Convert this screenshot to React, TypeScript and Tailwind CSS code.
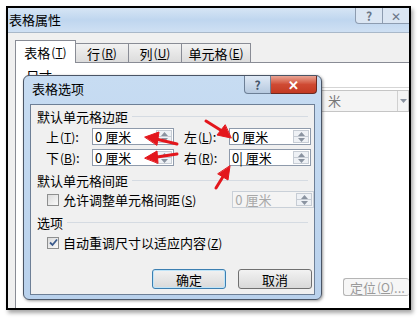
import React from "react";

const font = { fontFamily: '"Noto Sans CJK SC", "Noto Sans", sans-serif' };

function Key({ k }: { k: string }) {
  return (
    <span className="ml-[1px] text-[12px]">
      (<u>{k}</u>)
    </span>
  );
}

function Tri({ up }: { up?: boolean }) {
  return (
    <svg width="7" height="4" viewBox="0 0 7 4">
      <path d={up ? "M0 4 L3.5 0 L7 4 Z" : "M0 0 L3.5 4 L7 0 Z"} fill="#8a93a0" />
    </svg>
  );
}

function Spin({ value, disabled }: { value: string; disabled?: boolean }) {
  return (
    <div
      className={`flex h-[17px] w-[82px] items-stretch border ${
        disabled ? "border-[#c9d0d8] bg-[#f4f4f4] text-[#a8a8a8]" : "border-[#8e9aab] bg-white text-black"
      }`}
    >
      <div className="flex-1 pl-[2px] text-[13px] leading-[15px]">{value}</div>
      <div className="my-[1px] mr-[1px] flex w-[16px] flex-col border border-[#c6ccd4] bg-[#eef1f5]">
        <div className="flex flex-1 items-center justify-center border-b border-[#c6ccd4]">
          <Tri up />
        </div>
        <div className="flex flex-1 items-center justify-center">
          <Tri />
        </div>
      </div>
    </div>
  );
}

function GroupLabel({ text }: { text: string }) {
  return (
    <div className="flex h-[14px] items-center gap-[4px] pl-[6px] pr-[6px]">
      <span className="text-[13px] leading-none">{text}</span>
      <div className="h-px flex-1 bg-[#d5dbe2]" />
    </div>
  );
}

function Arrows() {
  return (
    <svg className="pointer-events-none absolute left-0 top-0" width="418" height="318">
      <g fill="#e3161c" stroke="#e3161c" strokeLinecap="round">
        <line x1="177" y1="144" x2="156" y2="139" strokeWidth="3" />
        <polygon points="145,137 159,132 157,145" strokeWidth="1" />
        <line x1="177" y1="154" x2="157" y2="157" strokeWidth="3" />
        <polygon points="145,158 157,151 158,163" strokeWidth="1" />
        <line x1="206" y1="121" x2="222" y2="131" strokeWidth="3" />
        <polygon points="231,138 217,135 225,125" strokeWidth="1" />
        <line x1="216" y1="188" x2="224" y2="175" strokeWidth="3" />
        <polygon points="230,166 228,180 218,174" strokeWidth="1" />
      </g>
    </svg>
  );
}

function InnerDialog() {
  return (
    <div className="absolute left-[23px] top-[75px] h-[225px] w-[299px] rounded-[6px] border border-[#4a5566] bg-gradient-to-b from-[#c7dcf2] to-[#b9d1ec] shadow-[1px_1px_3px_rgba(0,0,0,0.4)]">
      <div className="flex h-[28px] items-start">
        <div className="pl-[8px] pt-[4px] text-[13px] leading-[18px] text-black">表格选项</div>
        <div className="ml-auto flex">
          <div className="flex h-[18px] w-[27px] items-center justify-center rounded-bl-[4px] border border-t-0 border-[#6c7f96] bg-gradient-to-b from-[#dfe9f5] to-[#b6c9df] text-[12px] font-bold leading-none text-[#44546a]">
            ?
          </div>
          <div className="mr-[4px] flex h-[18px] w-[46px] items-center justify-center rounded-br-[4px] border border-l-0 border-t-0 border-[#6b2a22] bg-gradient-to-b from-[#e8a393] via-[#cf4a33] to-[#c33a22] text-[13px] font-bold leading-none text-white">
            ✕
          </div>
        </div>
      </div>
      <div className="mx-[6px] flex h-[191px] flex-col border border-[#6d7f96] bg-[#f0f0f0] pt-[4px] text-black">
        <GroupLabel text="默认单元格边距" />
        <div className="mt-[5px] flex h-[17px] items-center">
          <span className="w-[61px] pl-[15px] text-[13px] leading-none">
            上<Key k="T" />:
          </span>
          <Spin value="0 厘米" />
          <span className="w-[55px] pl-[10px] text-[13px] leading-none">
            左<Key k="L" />:
          </span>
          <Spin value="0 厘米" />
        </div>
        <div className="mt-[4px] flex h-[17px] items-center">
          <span className="w-[61px] pl-[15px] text-[13px] leading-none">
            下<Key k="B" />:
          </span>
          <Spin value="0 厘米" />
          <span className="w-[55px] pl-[10px] text-[13px] leading-none">
            右<Key k="R" />:
          </span>
          <Spin value="0| 厘米" />
        </div>
        <div className="mt-[7px]">
          <GroupLabel text="默认单元格间距" />
        </div>
        <div className="mt-[4px] flex h-[17px] items-center">
          <div className="ml-[16px] h-[12px] w-[12px] border border-[#8e8f8f] bg-gradient-to-br from-[#dcdcdc] to-[#fafafa]" />
          <span className="ml-[4px] w-[170px] text-[13px] leading-none">
            允许调整单元格间距<Key k="S" />
          </span>
          <Spin value="0 厘米" disabled />
        </div>
        <div className="mt-[7px]">
          <GroupLabel text="选项" />
        </div>
        <div className="mt-[5px] flex h-[17px] items-center">
          <div className="ml-[16px] flex h-[12px] w-[12px] items-center justify-center border border-[#8e8f8f] bg-gradient-to-br from-[#dcdcdc] to-[#fafafa]">
            <svg width="9" height="9" viewBox="0 0 9 9">
              <path d="M1 4.5 L3.5 7 L8 1.5" fill="none" stroke="#3a5a8c" strokeWidth="1.8" />
            </svg>
          </div>
          <span className="ml-[4px] text-[13px] leading-none">
            自动重调尺寸以适应内容<Key k="Z" />
          </span>
        </div>
        <div className="mt-[18px] flex gap-[12px] pl-[121px]">
          <div className="flex h-[20px] w-[74px] items-center justify-center rounded-[3px] border border-[#3c7fb1] bg-gradient-to-b from-[#f2f2f2] to-[#d9d9d9] text-[13px] leading-none shadow-[inset_0_0_0_1px_#bfe4f8]">
            确定
          </div>
          <div className="flex h-[20px] w-[74px] items-center justify-center rounded-[3px] border border-[#707070] bg-gradient-to-b from-[#f2f2f2] to-[#d9d9d9] text-[13px] leading-none">
            取消
          </div>
        </div>
      </div>
    </div>
  );
}

export default function App() {
  return (
    <div className="relative h-[318px] w-[418px] overflow-hidden bg-white pl-[6px] pt-[6px]" style={font}>
      {/* 截图外框 */}
      <div className="flex h-[304px] w-[405px] flex-col overflow-hidden border-2 border-black bg-[#f0f0f0] shadow-[2px_3px_4px_rgba(0,0,0,0.35)]">
        {/* 标题栏 */}
        <div className="flex h-[24px] items-start bg-gradient-to-b from-[#d6e5f5] via-[#bfd6ef] to-[#cfe0f3]">
          <span className="pl-[1px] pt-[4px] text-[13px] leading-[16px] text-black">表格属性</span>
          <div className="ml-auto flex">
            <div className="flex h-[16px] w-[28px] items-center justify-center rounded-bl-[4px] border border-t-0 border-[#8d9cb0] bg-[#dbe6f3] text-[12px] font-bold leading-none text-[#6a7686]">
              ?
            </div>
            <div className="flex h-[16px] w-[26px] items-center justify-start border-b border-[#8d9cb0] bg-[#dbe6f3] pl-[8px] text-[12px] leading-none text-[#6a7686]">
              ✕
            </div>
          </div>
        </div>
        <div className="h-px bg-[#a9b8c9]" />
        {/* 选项卡 */}
        <div className="mt-[7px] flex items-end pl-[7px]">
          <div className="z-10 -mb-px flex h-[23px] w-[61px] items-center justify-center border border-b-0 border-[#898c95] bg-white text-[13px] leading-none">
            表格<Key k="T" />
          </div>
          <div className="flex h-[19px] w-[53px] items-center justify-center border border-b-0 border-l-0 border-[#898c95] bg-gradient-to-b from-[#f2f2f2] to-[#dcdcdc] text-[13px] leading-none">
            行<Key k="R" />
          </div>
          <div className="flex h-[19px] w-[53px] items-center justify-center border border-b-0 border-l-0 border-[#898c95] bg-gradient-to-b from-[#f2f2f2] to-[#dcdcdc] text-[13px] leading-none">
            列<Key k="U" />
          </div>
          <div className="flex h-[19px] w-[69px] items-center justify-center border border-b-0 border-l-0 border-[#898c95] bg-gradient-to-b from-[#f2f2f2] to-[#dcdcdc] text-[13px] leading-none">
            单元格<Key k="E" />
          </div>
        </div>
        {/* 选项卡内容 */}
        <div className="ml-[7px] flex flex-1 flex-col border-l border-t border-[#898c95] bg-white">
          <div className="flex h-[24px] items-center pl-[10px] text-[13px] leading-none">尺寸</div>
          <div className="ml-[30px] h-px bg-[#d5d5d5]" />
          <div className="mt-[2px] flex justify-end">
            <div className="flex h-[22px] w-[90px] items-center border border-[#c5c5c5] bg-[#f4f4f4]">
              <span className="flex-1 pl-[8px] text-[13px] text-[#777]">米</span>
              <div className="flex h-full w-[11px] items-center justify-center border-l border-[#d0d0d0]">
                <Tri />
              </div>
            </div>
          </div>
          <div className="mt-auto mb-[12px] flex justify-end">
            <div className="flex h-[18px] w-[66px] items-center justify-start rounded-[3px] border border-r-0 border-[#b5b5b5] bg-[#f6f6f6] pl-[6px] text-[13px] leading-none text-[#9a9a9a]">
              定位<Key k="O" />...
            </div>
          </div>
        </div>
      </div>
      <InnerDialog />
      <Arrows />
    </div>
  );
}
